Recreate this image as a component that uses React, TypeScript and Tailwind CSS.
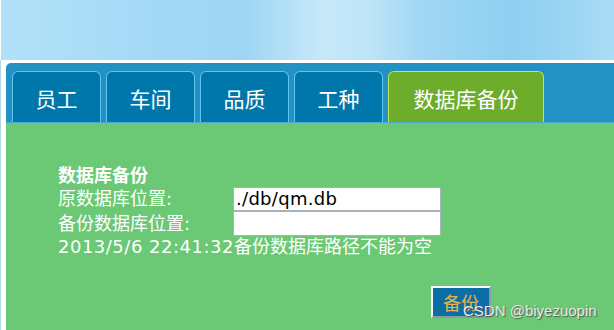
import React from "react";

const tabs = ["员工", "车间", "品质", "工种"];

export default function App() {
  return (
    <div className="relative w-[614px] h-[330px] overflow-hidden bg-white font-['DejaVu_Sans','Noto_Sans_CJK_SC',sans-serif]">
      <div className="ml-[1px] h-[60px] bg-[linear-gradient(90deg,#b2e2f9_0%,#a6daf6_20%,#9dd6f4_40%,#c6e8f9_52%,#bfe5f8_60%,#a2d8f5_68%,#8ecff1_83%,#9ad5f3_92%,#a9dcf6_100%)]" />
      <div className="flex h-[270px]">
        <div className="w-[1px] bg-[#b6d6e6]" />
        <div className="flex-1 pl-[5px] pt-[3px] flex flex-col">
          <div className="h-[60px] bg-[#2391c2] rounded-tl-[5px] flex items-end pl-[6px] gap-[5px] border-b border-[#4aa9d6]">
            {tabs.map((t) => (
              <div
                key={t}
                className="w-[89px] h-[51px] rounded-t-[6px] border border-b-0 border-[#5cc6f0] bg-[#0077aa] text-white text-[21px] flex items-center justify-center pt-[3px] font-['Noto_Sans_CJK_SC',sans-serif]"
              >
                {t}
              </div>
            ))}
            <div className="w-[156px] h-[51px] rounded-t-[6px] border border-b-0 border-[#c4e64e] bg-[#6dad2b] text-white text-[21px] flex items-center justify-center pt-[3px] font-['Noto_Sans_CJK_SC',sans-serif]">
              数据库备份
            </div>
          </div>
          <div className="flex-1 bg-[#6bc874] pl-[52px] pt-[42px] text-white text-[18px]">
            <div className="grid grid-cols-[175px_208px]">
              <div className="col-span-2 h-[22px] leading-[22px] font-bold">数据库备份</div>
              <div className="h-[24px] leading-[24px]">原数据库位置:</div>
              <div className="h-[24px] bg-white border border-[#a9b1ba] text-black leading-[22px] pl-[2px] tracking-[0.3px]">./db/qm.db</div>
              <div className="h-[25px] leading-[25px]">备份数据库位置:</div>
              <div className="h-[25px] bg-white border border-[#a9b1ba]" />
              <div className="col-span-2 h-[22px] leading-[22px] whitespace-nowrap">
                <span className="tracking-[0.5px]">2013/5/6 22:41:32</span>备份数据库路径不能为空
              </div>
            </div>
            <div className="mt-[28px] ml-[373px] w-[60px] h-[32px] bg-[#0b6fa5] border-2 border-t-white border-l-white border-b-[#8c9aa6] border-r-[#8c9aa6] text-[#e6b24e] text-[18px] flex items-center justify-center font-['Noto_Sans_CJK_SC',sans-serif]">
              备份
            </div>
          </div>
        </div>
      </div>
      <div className="absolute left-[463px] top-[302px] text-[15px] leading-[18px] text-[#e8e8e8] font-['Liberation_Sans',sans-serif] [text-shadow:1px_1px_1px_#555]">
        CSDN @biyezuopin
      </div>
    </div>
  );
}
